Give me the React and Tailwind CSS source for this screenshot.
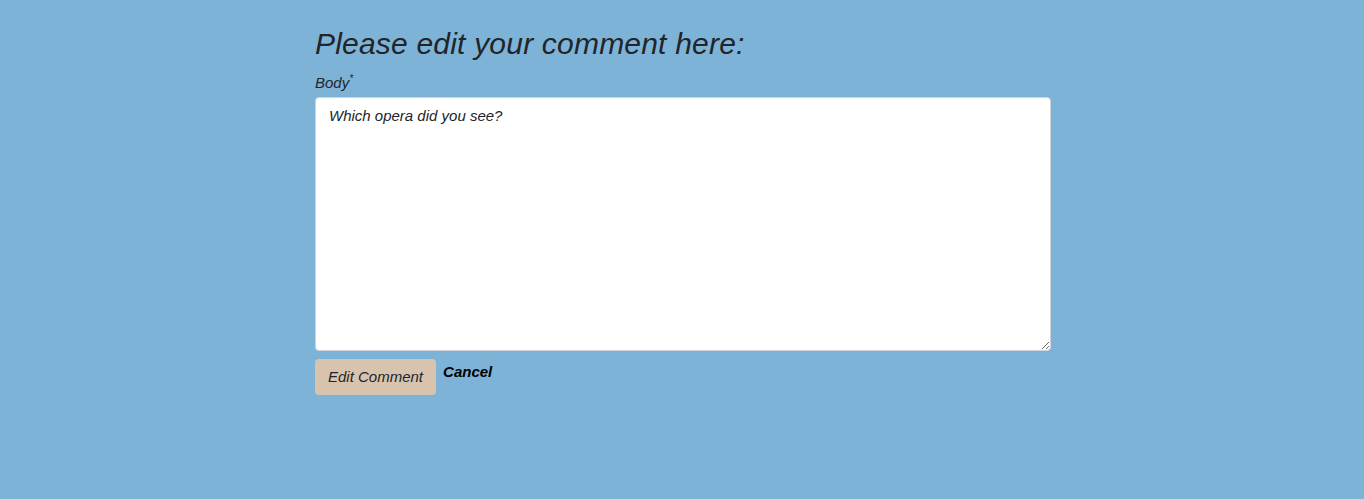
import React, { useState } from "react";

const App = () => {
  //comment body shown in the textarea
  const [body, setBody] = useState("Which opera did you see?");

  return (
    <div
      className="min-h-[499px] w-full bg-[#7eb3d8] text-[#212529]"
      style={{ fontFamily: '"Liberation Sans", Arial, sans-serif' }}
    >
      <div className="w-[738px] mx-auto pl-[2px] pt-[22px]">
        <h2 className="text-[30px] italic leading-[44px] mb-[3px] tracking-[0.2px]">
          Please edit your comment here:
        </h2>
        <form onSubmit={(e) => e.preventDefault()}>
          <label className="block text-[15px] italic leading-[20px] mb-[4px]">
            Body<span className="text-[10px] align-super">*</span>
          </label>
          <textarea
            value={body}
            onChange={(e) => setBody(e.target.value)}
            className="block w-full h-[254px] bg-white border border-[#ced4da] rounded-[4px] px-[13px] py-[6px] text-[15px] italic leading-[24px] text-[#212529] outline-none"
          />
          <div className="flex items-start mt-[8px]">
            <button
              type="submit"
              className="h-[36px] px-[13px] bg-[#d8c4ae] rounded-[4px] text-[15px] italic text-[#212529]"
            >
              Edit Comment
            </button>
            <a href="#" className="ml-[7px] mt-[2px] text-[15px] italic font-bold text-black">
              Cancel
            </a>
          </div>
        </form>
      </div>
    </div>
  );
};

export default App;
